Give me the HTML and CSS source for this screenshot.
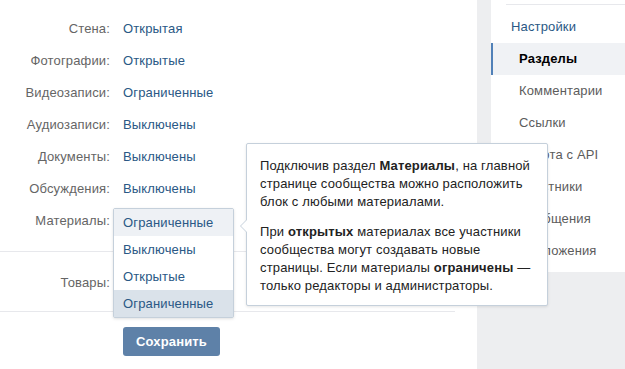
FILE: index.html
```html
<!DOCTYPE html>
<html lang="ru">
<head>
    <meta charset="UTF-8">
    <meta name="viewport" content="width=device-width, initial-scale=1.0">
    <title>Разделы</title>
    <link rel="stylesheet" href="styles.css">
</head>

<body>

    <div class="page">
        <div class="main">
            <div class="rows">
                <div class="row"><div class="label">Стена:</div><div class="value">Открытая</div></div>
                <div class="row"><div class="label">Фотографии:</div><div class="value">Открытые</div></div>
                <div class="row"><div class="label">Видеозаписи:</div><div class="value">Ограниченные</div></div>
                <div class="row"><div class="label">Аудиозаписи:</div><div class="value">Выключены</div></div>
                <div class="row"><div class="label">Документы:</div><div class="value">Выключены</div></div>
                <div class="row"><div class="label">Обсуждения:</div><div class="value">Выключены</div></div>
                <div class="row">
                    <div class="label">Материалы:</div>
                    <div class="value select-holder">
                        Ограниченные
                        <ul class="dropdown">
                            <li class="hover">Ограниченные</li>
                            <li>Выключены</li>
                            <li>Открытые</li>
                            <li class="selected">Ограниченные</li>
                        </ul>
                    </div>
                </div>
            </div>

            <div class="section">
                <div class="row"><div class="label">Товары:</div><div class="value">Выключены</div></div>
            </div>

            <div class="actions">
                <button type="button" class="save">Сохранить</button>
            </div>

            <div class="tooltip">
                <p>Подключив раздел <b>Материалы</b>, на главной странице сообщества можно расположить блок с любыми материалами.</p>
                <p>При <b>открытых</b> материалах все участники сообщества могут создавать новые страницы. Если материалы <b>ограничены</b> — только редакторы и администраторы.</p>
            </div>
        </div>

        <div class="sidebar">
            <div class="side-top"></div>
            <a class="side-head">Настройки</a>
            <a class="side-item active">Разделы</a>
            <a class="side-item">Комментарии</a>
            <a class="side-item">Ссылки</a>
            <a class="side-item">Работа с API</a>
            <a class="side-item">Участники</a>
            <a class="side-item">Сообщения</a>
            <a class="side-item">Приложения</a>
        </div>
    </div>

</body>
</html>
```

FILE: styles.css
```css
body {
    margin: 0;
    padding: 0;
    background: #edeef0;
    font-family: "Liberation Sans", Arial, sans-serif;
    font-size: 13px;
    letter-spacing: 0.15px;
}

.page {
    display: flex;
    gap: 14px;
    align-items: flex-start;
}

.main {
    position: relative;
    width: 477px;
    min-height: 369px;
    background: #fff;
    box-sizing: border-box;
    padding: 13px 22px 0 0;
}

.row {
    display: flex;
    height: 32px;
    line-height: 32px;
}

.label {
    width: 110px;
    text-align: right;
    color: #656565;
}

.value {
    margin-left: 13px;
    color: #2a5885;
}

.select-holder {
    position: relative;
}

.dropdown {
    position: absolute;
    left: -10px;
    top: 3px;
    width: 119px;
    margin: 0;
    padding: 0;
    list-style: none;
    background: #fff;
    border: 1px solid #c5d0db;
    border-radius: 2px;
    box-shadow: 0 1px 3px rgba(0, 0, 0, 0.12);
    z-index: 2;
}

.dropdown li {
    height: 27px;
    line-height: 27px;
    padding-left: 9px;
    color: #2a5885;
}

.dropdown li.hover {
    background: #eef1f5;
}

.dropdown li.selected {
    background: #dae2ea;
}

.section {
    margin-top: 14px;
    padding: 15px 0 12px;
    border-top: 1px solid #e7e8ec;
    border-bottom: 1px solid #e7e8ec;
}

.actions {
    padding: 15px 0 0 123px;
}

.save {
    width: 97px;
    height: 29px;
    border: none;
    border-radius: 3px;
    background: #5e81a8;
    color: #fff;
    font-family: inherit;
    font-size: 13px;
    font-weight: bold;
    letter-spacing: 0.15px;
    cursor: pointer;
}

.tooltip {
    position: absolute;
    left: 246px;
    top: 143px;
    width: 276px;
    padding: 13px 11px 10px 13px;
    background: #fff;
    border: 1px solid #c5d0db;
    border-radius: 2px;
    box-shadow: 0 1px 3px rgba(0, 0, 0, 0.1);
    color: #222;
    line-height: 18px;
    z-index: 3;
}

.tooltip::before,
.tooltip::after {
    content: "";
    position: absolute;
    top: 75px;
    border: 7px solid transparent;
    border-left: none;
}

.tooltip::before {
    left: -7px;
    border-right-color: #c5d0db;
}

.tooltip::after {
    left: -6px;
    border-right-color: #fff;
}

.tooltip p {
    margin: 0;
}

.tooltip p + p {
    margin-top: 12px;
}

.sidebar {
    width: 134px;
    background: #fff;
    padding: 4px 0 5px;
}

.side-top {
    margin-left: 15px;
    border-top: 1px solid #e7e8ec;
    margin-bottom: 6px;
}

.sidebar a {
    display: block;
    height: 32px;
    line-height: 32px;
    white-space: nowrap;
}

.side-head {
    padding-left: 20px;
    color: #2a5885;
}

.side-item {
    padding-left: 28px;
    color: #5c5c5c;
}

.side-item.active {
    padding-left: 26px;
    border-left: 2px solid #5181b8;
    background: #f0f2f5;
    color: #000;
    font-weight: bold;
}
```
